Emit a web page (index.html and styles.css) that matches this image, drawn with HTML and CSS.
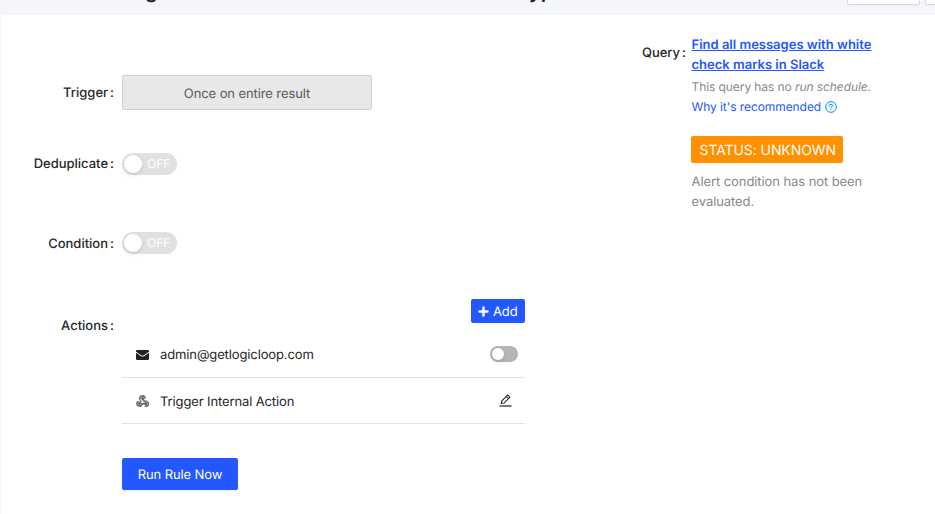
FILE: index.html
```html
<!DOCTYPE html>
<html lang="en">
<head>
<meta charset="utf-8">
<title>Rule</title>
<link rel="stylesheet" href="styles.css">
</head>
<body>
<header class="header">
  <div class="title"><span class="title-start">g</span><span class="title-end">yp</span></div>
  <div class="header-button"></div>
  <div class="header-button"></div>
</header>
<main class="panel">
  <section class="form">
    <div class="row row-trigger">
      <div class="label">Trigger<span class="colon">:</span></div>
      <div class="trigger">Once on entire result</div>
    </div>
    <div class="row row-dedupe">
      <div class="label">Deduplicate<span class="colon">:</span></div>
      <div class="switch"><i class="knob"></i><span>OFF</span></div>
    </div>
    <div class="row row-condition">
      <div class="label">Condition<span class="colon">:</span></div>
      <div class="switch"><i class="knob"></i><span>OFF</span></div>
    </div>
    <div class="row row-actions">
      <div class="label">Actions<span class="colon">:</span></div>
      <div class="actions">
        <div class="add">
          <svg width="11" height="11" viewBox="0 0 11 11"><path d="M5.5 1.5v8M1.5 5.5h8" stroke="#fff" stroke-width="2.4" stroke-linecap="round"/></svg>
          <span class="add-text">Add</span>
        </div>
        <div class="item">
          <svg class="item-icon" width="13" height="10" viewBox="0 0 13 10"><rect width="13" height="10" rx="1.2" fill="#222"/><path d="M0 2.2 5 5.7Q6.5 6.7 8 5.7L13 2.2" fill="none" stroke="#fff" stroke-width="1"/></svg>
          <span class="item-text">admin@getlogicloop.com</span>
          <div class="mini-switch"><i class="knob"></i></div>
        </div>
        <div class="item">
          <svg class="item-icon" width="13" height="12" viewBox="0 0 13 12" fill="none" stroke="#707070" stroke-width="1.8"><path d="M4.2 4.8A2.6 2.6 0 1 1 9 3.7M6.5 3.3 8.5 6.7Q10.6 5.9 11.8 7.5A2.2 2.2 0 0 1 8.8 10.7M10 8.8H5.8A2.4 2.4 0 1 1 2.7 6.4M5.2 5.3 3.4 8.7"/><g fill="#606060" stroke="none"><circle cx="6.5" cy="3.4" r="1.3"/><circle cx="3.4" cy="8.8" r="1.3"/><circle cx="9.9" cy="8.8" r="1.3"/></g></svg>
          <span class="item-text">Trigger Internal Action</span>
          <svg class="edit" width="13" height="13" viewBox="0 0 13 13" fill="none" stroke="#222"><path d="M.5 12H12.5" stroke-width="1.2"/><path d="M2.3 9.4 2.9 6.8 8.7 1 10.9 3.2 5.1 9Z M7.3 2.5 9.4 4.6" stroke-width="1.05"/></svg>
        </div>
        <button class="run">Run Rule Now</button>
      </div>
    </div>
  </section>
  <aside class="side">
    <div class="label">Query<span class="colon">:</span></div>
    <div class="query">
      <a class="query-link">Find all messages with white<br>check marks in Slack</a>
      <div class="note">This query has no <em>run schedule</em>.</div>
      <div class="why"><span>Why it's recommended</span>
        <svg width="12" height="12" viewBox="0 0 12 12" fill="none" stroke="#1890ff"><circle cx="6" cy="6" r="5.4" fill="#e6f7ff"/><path d="M4.4 4.8Q4.4 3.3 6 3.3T7.6 4.7C7.6 5.8 6 5.7 6 7.1M6 8.1V9"/></svg>
      </div>
      <div class="status">STATUS: UNKNOWN</div>
      <div class="desc">Alert condition has not been<br>evaluated.</div>
    </div>
  </aside>
</main>
</body>
</html>
```
FILE: styles.css
```css
* { box-sizing: border-box; }
body {
  margin: 0;
  height: 514px;
  overflow: hidden;
  background: #f5f6f9;
  color: #262626;
  font: 13px/20px Inter, "Liberation Sans", sans-serif;
  text-rendering: geometricPrecision;
}
svg { display: block; flex: none; }
.header { display: flex; height: 15px; overflow: hidden; }
.title {
  display: flex;
  flex: none;
  width: 847px;
  padding-left: 145px;
  margin-top: -23px;
  font-size: 20px;
  font-weight: 600;
  line-height: 28px;
}
.title-start { width: 384px; }
.header-button {
  flex: none;
  width: 73px;
  height: 32px;
  margin: -27px 5px 0 0;
  background: #fff;
  border: 1px solid #d9d9d9;
  border-radius: 2px;
  box-shadow: 0 2px 0 rgba(0, 0, 0, .02);
}
.panel {
  display: flex;
  height: 500px;
  margin-left: 1px;
  padding-top: 22px;
  background: #fff;
  border-top-left-radius: 3px;
}
.form { width: 524px; padding-top: 38px; }
.row { display: flex; align-items: center; }
.row-trigger { height: 35px; }
.row-dedupe { height: 22px; margin-top: 43px; }
.row-condition { height: 22px; margin-top: 57px; }
.row-condition .label { padding-top: 2px; }
.row-actions { align-items: flex-start; margin-top: 45px; }
.label {
  flex: none;
  width: 113px;
  margin-right: 8px;
  text-align: right;
  font-weight: 500;
  white-space: nowrap;
}
.colon { margin-left: 2px; }
.row-actions .label { margin-top: 17px; }
.trigger {
  width: 250px;
  height: 35px;
  padding-top: 2px;
  border: 1px solid #d0d0d0;
  border-radius: 2px;
  background: #e8e8e8;
  color: #595959;
  line-height: 33px;
  letter-spacing: -.1px;
  text-align: center;
}
.switch {
  display: flex;
  align-items: center;
  gap: 5px;
  width: 55px;
  height: 22px;
  padding-left: 2px;
  border-radius: 11px;
  background: #e1e1e1;
  color: #fff;
  font-size: 12px;
}
.knob {
  width: 18px;
  height: 18px;
  border-radius: 50%;
  background: #fff;
  box-shadow: 0 2px 4px rgba(0, 35, 11, .12);
}
.actions { width: 403px; }
.add {
  display: flex;
  align-items: center;
  gap: 4px;
  width: 54px;
  height: 24px;
  margin: 0 0 8px auto;
  padding-left: 7px;
  border-radius: 2px;
  background: #2357ff;
  color: #fff;
}
.add-text { padding-top: 2px; letter-spacing: -.1px; }
.item {
  display: flex;
  align-items: center;
  height: 46px;
  padding: 0 7px 0 14px;
  border-bottom: 1px solid #e2e2e2;
}
.add + .item { height: 47px; }
.item-icon { margin-top: 1px; }
.item-text { width: 310px; margin-left: 11px; padding-top: 2px; letter-spacing: -.12px; }
.mini-switch {
  display: flex;
  align-items: center;
  width: 28px;
  height: 16px;
  margin-left: auto;
  padding-left: 2px;
  border-radius: 8px;
  background: #b5b5b5;
}
.mini-switch .knob { width: 12px; height: 12px; }
.edit { margin: 0 6px 0 auto; }
.run {
  display: block;
  width: 116px;
  height: 32px;
  margin-top: 34px;
  padding: 2px 0 0;
  border: 0;
  border-radius: 2px;
  background: #2357ff;
  box-shadow: 0 2px 0 rgba(0, 0, 0, .04);
  color: #fff;
  font: inherit;
  letter-spacing: -.1px;
  text-rendering: inherit;
}
.side { display: flex; width: 370px; margin-left: 81px; }
.side .label { width: 80px; margin-right: 5px; padding-top: 6px; }
.query { width: 200px; margin-top: -2px; }
.query-link {
  display: block;
  margin-left: .5px;
  color: #2357ff;
  font-weight: 600;
  text-decoration: underline;
  white-space: nowrap;
}
.note { margin-left: .5px; padding-top: 2px; color: #888; font-size: 12px; letter-spacing: -.08px; white-space: nowrap; }
.why { display: flex; align-items: center; gap: 4px; margin-left: .5px; color: #2357ff; font-size: 12px; letter-spacing: -.08px; }
.status {
  width: 152px;
  height: 27px;
  margin: 19px 0 9px;
  padding: 1px 0 0 8.5px;
  border-radius: 2px;
  background: #ff9100;
  color: #fff;
  font-size: 14px;
  line-height: 28px;
  letter-spacing: -.08px;
  white-space: nowrap;
}
.desc { margin-left: .5px; color: #888; letter-spacing: -.08px; white-space: nowrap; }
```
